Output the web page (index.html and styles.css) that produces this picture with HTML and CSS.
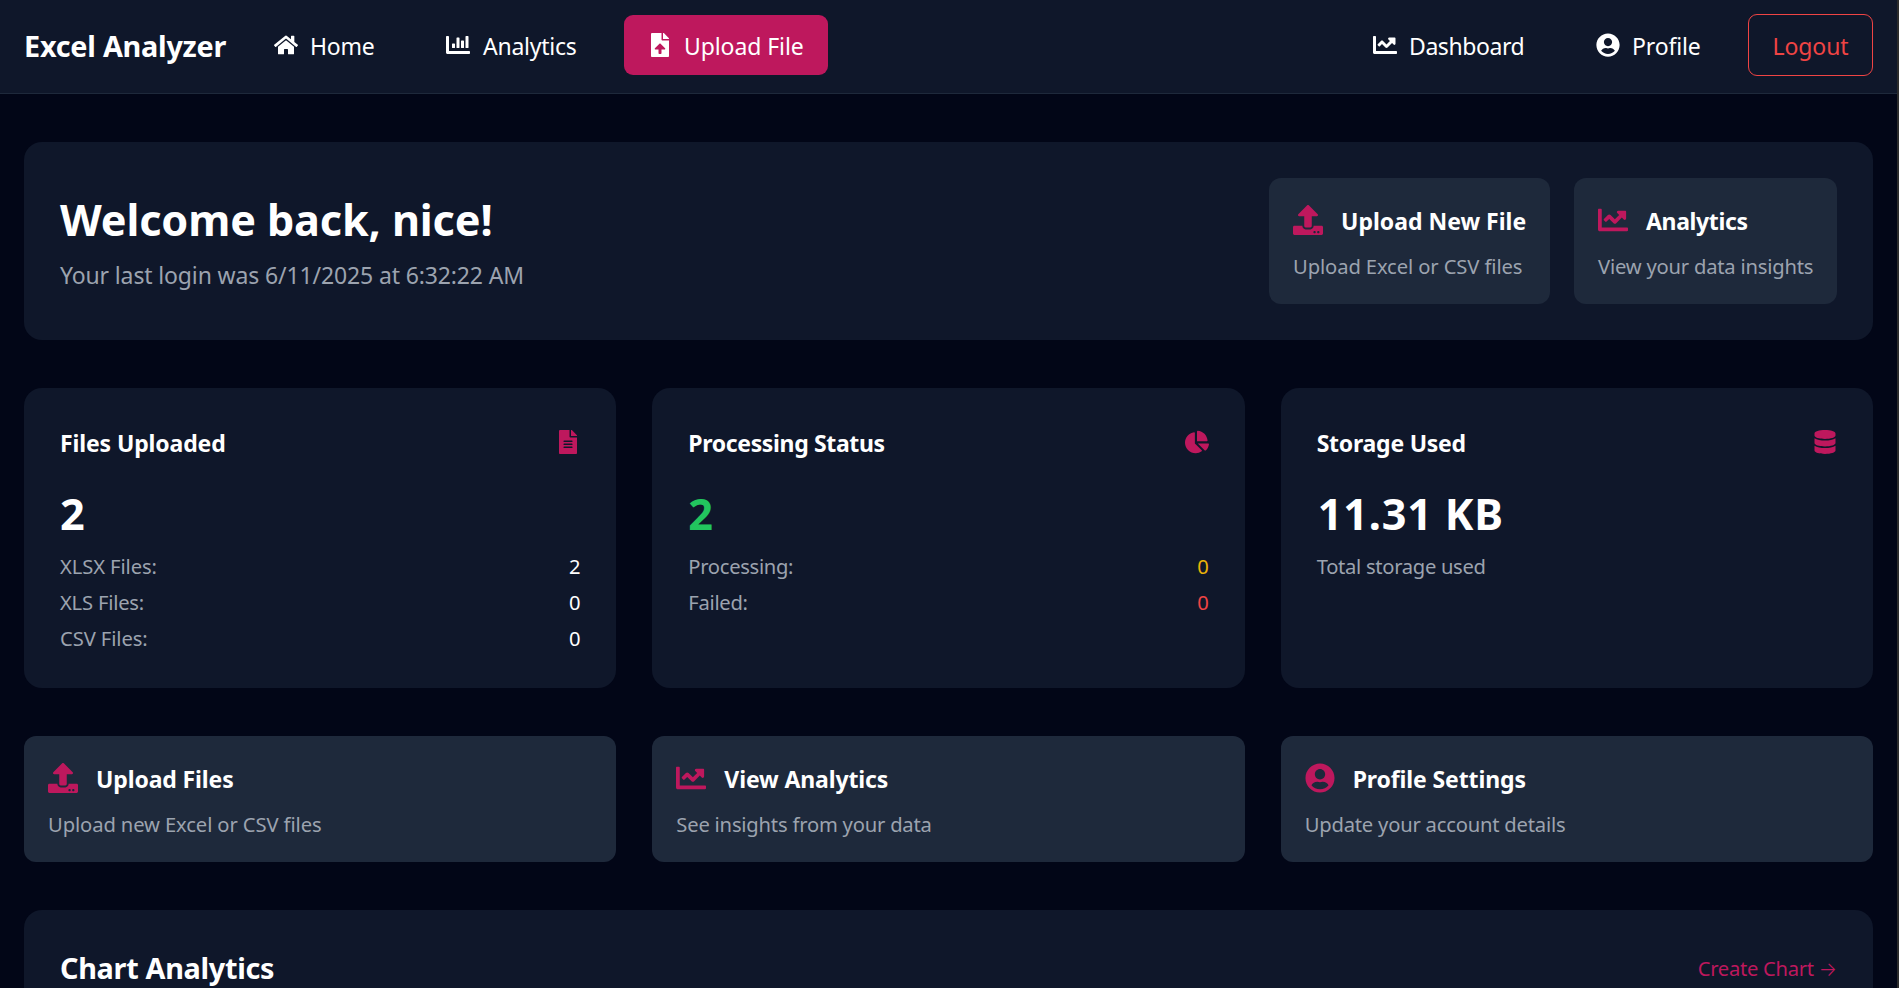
FILE: index.html
```html
<!DOCTYPE html>
<html lang="en">
<head>
<meta charset="utf-8">
<title>Excel Analyzer</title>
<link rel="stylesheet" href="styles.css">
</head>
<body>
<svg class="sprite" aria-hidden="true">
  <symbol id="home" viewBox="0 0 576 512"><path d="M280.37 148.26L96 300.11V464a16 16 0 0 0 16 16l112.06-.29a16 16 0 0 0 15.92-16V368a16 16 0 0 1 16-16h64a16 16 0 0 1 16 16v95.64a16 16 0 0 0 16 16.05L464 480a16 16 0 0 0 16-16V300L295.67 148.26a12.19 12.19 0 0 0-15.3 0zM571.6 251.47L488 182.56V44.05a12 12 0 0 0-12-12h-56a12 12 0 0 0-12 12v72.61L318.47 43a48 48 0 0 0-61 0L4.34 251.47a12 12 0 0 0-1.6 16.9l25.5 31A12 12 0 0 0 45.15 301l235.22-193.74a12.19 12.19 0 0 1 15.3 0L530.9 301a12 12 0 0 0 16.9-1.6l25.5-31a12 12 0 0 0-1.7-16.93z"/></symbol>
  <symbol id="bars" viewBox="0 0 512 512"><path d="M332.8 320h38.4c6.4 0 12.8-6.4 12.8-12.8V172.8c0-6.4-6.4-12.8-12.8-12.8h-38.4c-6.4 0-12.8 6.4-12.8 12.8v134.4c0 6.4 6.4 12.8 12.8 12.8zm96 0h38.4c6.4 0 12.8-6.4 12.8-12.8V76.8c0-6.4-6.4-12.8-12.8-12.8h-38.4c-6.4 0-12.8 6.4-12.8 12.8v230.4c0 6.4 6.4 12.8 12.8 12.8zm-288 0h38.4c6.4 0 12.8-6.4 12.8-12.8v-70.4c0-6.4-6.4-12.8-12.8-12.8h-38.4c-6.4 0-12.8 6.4-12.8 12.8v70.4c0 6.4 6.4 12.8 12.8 12.8zm96 0h38.4c6.4 0 12.8-6.4 12.8-12.8V108.8c0-6.4-6.4-12.8-12.8-12.8h-38.4c-6.4 0-12.8 6.4-12.8 12.8v198.4c0 6.4 6.4 12.8 12.8 12.8zM496 384H64V80c0-8.84-7.16-16-16-16H16C7.16 64 0 71.16 0 80v336c0 17.67 14.33 32 32 32h464c8.84 0 16-7.16 16-16v-32c0-8.84-7.16-16-16-16z"/></symbol>
  <symbol id="file-up" viewBox="0 0 384 512"><path d="M224 136V0H24C10.7 0 0 10.7 0 24v464c0 13.3 10.7 24 24 24h336c13.3 0 24-10.7 24-24V160H248c-13.2 0-24-10.8-24-24zm65.18 216.01H224v80c0 8.84-7.16 16-16 16h-32c-8.84 0-16-7.16-16-16v-80H94.82c-14.28 0-21.41-17.29-11.27-27.36l96.42-95.7c6.65-6.61 17.39-6.61 24.04 0l96.42 95.7c10.15 10.07 3.03 27.36-11.25 27.36zM377 105L279.1 7c-4.5-4.5-10.6-7-17-7H256v128h128v-6.1c0-6.3-2.5-12.4-7-16.9z"/></symbol>
  <symbol id="line" viewBox="0 0 512 512"><path d="M496 384H64V80c0-8.84-7.16-16-16-16H16C7.16 64 0 71.16 0 80v336c0 17.67 14.33 32 32 32h464c8.84 0 16-7.16 16-16v-32c0-8.84-7.16-16-16-16zM464 96H345.94c-21.38 0-32.09 25.85-16.97 40.97l32.4 32.4L288 242.75l-73.37-73.37c-12.5-12.5-32.76-12.5-45.25 0l-68.69 68.69c-6.25 6.25-6.25 16.38 0 22.63l22.62 22.62c6.25 6.25 16.38 6.25 22.63 0L192 237.25l73.37 73.37c12.5 12.5 32.76 12.5 45.25 0l96-96 32.4 32.4c15.12 15.12 40.97 4.41 40.97-16.97V112c.01-8.84-7.15-16-15.99-16z"/></symbol>
  <symbol id="user" viewBox="0 0 496 512"><path d="M248 8C111 8 0 119 0 256s111 248 248 248 248-111 248-248S385 8 248 8zm0 96c48.6 0 88 39.4 88 88s-39.4 88-88 88-88-39.4-88-88 39.4-88 88-88zm0 344c-58.7 0-111.3-26.6-146.5-68.2 18.8-35.4 55.6-59.8 98.5-59.8 2.4 0 4.8.4 7.1 1.1 13 4.2 26.6 6.9 40.9 6.9 14.3 0 28-2.7 40.9-6.9 2.3-.7 4.7-1.1 7.1-1.1 42.9 0 79.7 24.4 98.5 59.8C359.3 421.4 306.7 448 248 448z"/></symbol>
  <symbol id="upload" viewBox="0 0 512 512"><path d="M296 384h-80c-13.3 0-24-10.7-24-24V192h-87.7c-17.8 0-26.7-21.5-14.1-34.1L242.3 5.7c7.5-7.5 19.8-7.5 27.3 0l152.2 152.2c12.6 12.6 3.7 34.1-14.1 34.1H320v168c0 13.3-10.7 24-24 24zm216-8v112c0 13.3-10.7 24-24 24H24c-13.3 0-24-10.7-24-24V376c0-13.3 10.7-24 24-24h136v8c0 30.9 25.1 56 56 56h80c30.9 0 56-25.1 56-56v-8h136c13.3 0 24 10.7 24 24zm-124 88c0-11-9-20-20-20s-20 9-20 20 9 20 20 20 20-9 20-20zm64 0c0-11-9-20-20-20s-20 9-20 20 9 20 20 20 20-9 20-20z"/></symbol>
  <symbol id="file" viewBox="0 0 384 512"><path d="M224 136V0H24C10.7 0 0 10.7 0 24v464c0 13.3 10.7 24 24 24h336c13.3 0 24-10.7 24-24V160H248c-13.2 0-24-10.8-24-24zm64 236c0 6.6-5.4 12-12 12H108c-6.6 0-12-5.4-12-12v-8c0-6.6 5.4-12 12-12h168c6.6 0 12 5.4 12 12v8zm0-64c0 6.6-5.4 12-12 12H108c-6.6 0-12-5.4-12-12v-8c0-6.6 5.4-12 12-12h168c6.6 0 12 5.4 12 12v8zm0-72v8c0 6.6-5.4 12-12 12H108c-6.6 0-12-5.4-12-12v-8c0-6.6 5.4-12 12-12h168c6.6 0 12 5.4 12 12zm96-114.1v6.1H256V0h6.1c6.4 0 12.5 2.5 17 7l97.9 98c4.5 4.5 7 10.6 7 16.9z"/></symbol>
  <symbol id="pie" viewBox="0 0 544 512"><path d="M527.79 288H290.5l158.03 158.03c6.04 6.04 15.98 6.53 22.19.68 38.7-36.46 65.32-85.61 73.13-140.86 1.34-9.46-6.51-17.85-16.06-17.85zm-15.83-64.8C503.72 103.74 408.26 8.28 288.8.04 279.68-.59 272 7.1 272 16.24V240h223.77c9.14 0 16.82-7.68 16.19-16.8zM224 288V50.71c0-9.55-8.39-17.4-17.84-16.06C86.99 51.49-4.1 155.6.14 280.37 4.5 408.51 114.83 513.59 243.03 511.98c50.4-.63 96.97-16.87 135.26-44.03 7.9-5.6 8.42-17.23 1.57-24.08L224 288z"/></symbol>
  <symbol id="database" viewBox="0 0 448 512"><path d="M448 73.143v45.714C448 159.143 347.667 192 224 192S0 159.143 0 118.857V73.143C0 32.857 100.333 0 224 0s224 32.857 224 73.143zM448 176v102.857C448 319.143 347.667 352 224 352S0 319.143 0 278.857V176c48.125 33.143 136.208 48.572 224 48.572S399.874 209.143 448 176zm0 160v102.857C448 479.143 347.667 512 224 512S0 479.143 0 438.857V336c48.125 33.143 136.208 48.572 224 48.572S399.874 369.143 448 336z"/></symbol>
</svg>

<header class="navbar">
  <span class="brand">Excel Analyzer</span>
  <nav class="nav-main">
    <a class="nav-link nav-home"><svg class="icon"><use href="#home"/></svg><span class="label">Home</span></a>
    <a class="nav-link nav-analytics"><svg class="icon"><use href="#bars"/></svg><span class="label">Analytics</span></a>
    <a class="nav-link nav-upload active"><svg class="icon"><use href="#file-up"/></svg><span class="label">Upload File</span></a>
  </nav>
  <nav class="nav-user">
    <a class="nav-link nav-dashboard"><svg class="icon"><use href="#line"/></svg><span class="label">Dashboard</span></a>
    <a class="nav-link nav-profile"><svg class="icon"><use href="#user"/></svg><span class="label">Profile</span></a>
    <button class="logout">Logout</button>
  </nav>
</header>

<main class="page">
  <section class="panel welcome">
    <div class="greeting">
      <h1>Welcome back, nice!</h1>
      <p>Your last login was 6/11/2025 at 6:32:22 AM</p>
    </div>
    <div class="shortcuts">
      <a class="tile tile-new">
        <div class="tile-head"><svg class="icon-lg"><use href="#upload"/></svg><span class="tile-title">Upload New File</span></div>
        <p class="tile-text snug-1">Upload Excel or CSV files</p>
      </a>
      <a class="tile tile-analytics">
        <div class="tile-head"><svg class="icon-lg"><use href="#line"/></svg><span class="tile-title snug-3">Analytics</span></div>
        <p class="tile-text snug-2">View your data insights</p>
      </a>
    </div>
  </section>

  <section class="stats">
    <article class="panel stat">
      <div class="stat-head"><h2 class="snug-1">Files Uploaded</h2><svg class="icon"><use href="#file"/></svg></div>
      <div class="figure">2</div>
      <dl>
        <div class="row"><dt>XLSX Files:</dt><dd>2</dd></div>
        <div class="row"><dt class="snug-2">XLS Files:</dt><dd>0</dd></div>
        <div class="row"><dt>CSV Files:</dt><dd>0</dd></div>
      </dl>
    </article>
    <article class="panel stat">
      <div class="stat-head"><h2 class="snug-3">Processing Status</h2><svg class="icon"><use href="#pie"/></svg></div>
      <div class="figure green">2</div>
      <dl>
        <div class="row"><dt class="snug-3">Processing:</dt><dd class="yellow">0</dd></div>
        <div class="row"><dt class="snug-3">Failed:</dt><dd class="red">0</dd></div>
      </dl>
    </article>
    <article class="panel stat">
      <div class="stat-head"><h2 class="snug-2">Storage Used</h2><svg class="icon"><use href="#database"/></svg></div>
      <div class="figure storage">11.31 KB</div>
      <p class="note snug-3">Total storage used</p>
    </article>
  </section>

  <section class="actions">
    <a class="tile">
      <div class="tile-head"><svg class="icon-lg"><use href="#upload"/></svg><span class="tile-title snug-1">Upload Files</span></div>
      <p class="tile-text snug-1">Upload new Excel or CSV files</p>
    </a>
    <a class="tile">
      <div class="tile-head"><svg class="icon-lg"><use href="#line"/></svg><span class="tile-title snug-1">View Analytics</span></div>
      <p class="tile-text snug-2">See insights from your data</p>
    </a>
    <a class="tile">
      <div class="tile-head"><svg class="icon-lg"><use href="#user"/></svg><span class="tile-title snug-1">Profile Settings</span></div>
      <p class="tile-text snug-2">Update your account details</p>
    </a>
  </section>

  <section class="panel charts">
    <h2>Chart Analytics</h2>
    <a class="create">Create Chart <span class="arrow">→</span></a>
  </section>
</main>
</body>
</html>
```
FILE: styles.css
```css
* { box-sizing: border-box; margin: 0; padding: 0; }

html { height: 100%; overflow: hidden; }

body {
  height: 988px;
  overflow: hidden;
  border-right: 2px solid #2c2c2c;
  background: #020617;
  color: #fff;
  font-family: "Noto Sans", "Open Sans", sans-serif;
  font-size: 23px;
  line-height: 36px;
  white-space: nowrap;
}

.sprite { display: none; }
.icon, .icon-lg { flex: none; fill: currentColor; width: 24px; height: 24px; }
.icon-lg { width: 30px; height: 30px; color: #be185d; }

/* Navigation */
.navbar {
  display: flex;
  align-items: center;
  height: 94px;
  padding: 0 24px 3px;
  background: #0f172a;
  border-bottom: 1px solid #1e293b;
}
.brand {
  width: 226px;
  padding-top: 2px;
  font-size: 28.8px;
  font-weight: 700;
  letter-spacing: -0.0083em;
}
.nav-main, .nav-user { display: flex; align-items: center; }
.nav-user { margin-left: auto; }
.nav-link {
  display: flex;
  align-items: center;
  gap: 12px;
  height: 60px;
  padding: 0 24px;
  border-radius: 9px;
}
.label { padding-top: 2px; }
.active { background: #be185d; }
.nav-home { width: 172px; letter-spacing: -0.01em; }
.nav-analytics { width: 178px; margin-right: 24px; letter-spacing: -0.011em; }
.nav-analytics .label { padding-left: 1px; }
.nav-upload { width: 204px; letter-spacing: -0.004em; }
.nav-dashboard { width: 199px; margin-right: 24px; letter-spacing: -0.018em; }
.nav-profile { width: 152px; margin-right: 24px; letter-spacing: -0.006em; }
.logout {
  width: 125px;
  height: 62px;
  padding-top: 2px;
  border: 1px solid #ef4444;
  border-radius: 9px;
  background: none;
  color: #ef4444;
  font: inherit;
  letter-spacing: -0.003em;
}

/* Layout */
.page { display: flex; flex-direction: column; gap: 48px; padding: 48px 24px 0; }
.panel { padding: 36px; border-radius: 18px; background: #0f172a; }

/* Welcome */
.welcome { display: flex; align-items: center; justify-content: space-between; height: 198px; }
.greeting { padding-top: 4px; }
.greeting h1 { margin-bottom: 10px; font-size: 43.2px; line-height: 54px; letter-spacing: -0.003em; }
.greeting p { color: #9ca3af; letter-spacing: -0.0058em; }
.shortcuts { display: flex; gap: 24px; }

/* Tiles */
.tile {
  display: block;
  height: 126px;
  padding: 24px 24px 23px;
  border-radius: 12px;
  background: #1e293b;
}
.tile-new { width: 281px; }
.tile-analytics { width: 263px; }
.tile-head { display: flex; align-items: center; gap: 18px; height: 36px; margin-bottom: 13px; }
.tile-title { padding-top: 2px; font-weight: 700; }
.tile-text, .note, .row { font-size: 20.2px; line-height: 30px; color: #9ca3af; }

/* Statistics */
.stats, .actions { display: grid; grid-template-columns: repeat(3, 1fr); gap: 36px; }
.stat { height: 300px; padding-bottom: 35px; }
.stat-head { display: flex; align-items: center; justify-content: space-between; height: 36px; color: #be185d; }
.stat-head h2 { padding-top: 2px; font-size: 23px; color: #fff; }
.figure { margin: 27px 0 10px; font-size: 43.2px; font-weight: 700; line-height: 54px; }
.storage { padding-left: 1px; letter-spacing: 0.019em; }
.row { display: flex; justify-content: space-between; margin-bottom: 6px; letter-spacing: -0.005em; }
.row dd { color: #fff; }
.green { color: #22c55e; }
.row .yellow { color: #eab308; }
.row .red { color: #ef4444; }

/* Charts */
.charts {
  display: flex;
  align-items: flex-start;
  justify-content: space-between;
  height: 78px;
  padding-bottom: 0;
  border-radius: 18px 18px 0 0;
  line-height: 42px;
}
.charts h2 { padding-top: 1px; font-size: 28.8px; letter-spacing: -0.0104em; }
.create { padding-top: 1px; font-size: 20.2px; color: #be185d; letter-spacing: -0.0137em; }
.arrow { font-family: Inter, sans-serif; font-size: 19px; font-weight: 300; letter-spacing: 0; }

/* Tracking */
.snug-1 { letter-spacing: -0.0053em; }
.snug-2 { letter-spacing: -0.0102em; }
.snug-3 { letter-spacing: -0.0153em; }
```
